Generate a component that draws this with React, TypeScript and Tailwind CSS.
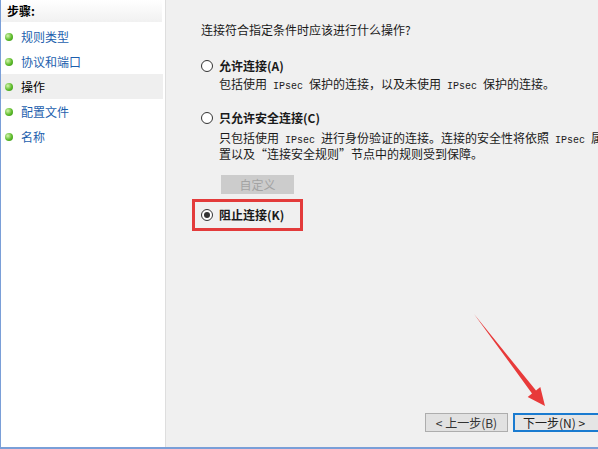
import React from "react";

const steps = ["规则类型", "协议和端口", "操作", "配置文件", "名称"];

function Ip() {
  return <span className="font-['Liberation_Mono'] text-[10px]"> IPsec </span>;
}

function Radio({ checked }: { checked?: boolean }) {
  return (
    <span className="w-[12px] h-[12px] rounded-full border border-[#333] bg-white flex items-center justify-center shrink-0">
      {checked && <span className="w-[6px] h-[6px] rounded-full bg-[#333]" />}
    </span>
  );
}

export default function App() {
  return (
    <div className="relative w-[598px] h-[449px] overflow-hidden flex flex-col font-['Noto_Sans_CJK_SC',sans-serif] text-[12px] text-[#1a1a1a] border-b-2 border-[#7a9fd8]">
      <div className="flex flex-1 min-h-0">
        {/* Steps */}
        <div className="w-[166px] shrink-0 bg-white border-l border-[#7a9fd8] border-r border-r-[#dedede] flex flex-col">
          <div className="h-[22px] pl-[6px] flex items-center font-bold text-black bg-gradient-to-b from-white to-[#f1f1f1] mr-[3px]">
            步骤:
          </div>
          <div className="mt-[2px] flex flex-col mr-[2px]">
            {steps.map((s, i) => (
              <div
                key={s}
                className={`h-[25px] flex items-center gap-[8px] pl-[4px] ${
                  i === 2 ? "bg-[#efefef] text-black" : "text-[#1d5fae]"
                }`}
              >
                <span className="w-[8px] h-[8px] rounded-full bg-[radial-gradient(circle_at_35%_35%,#d6f5b0,#5dbb2a_55%,#2e8a12)]" />
                {s}
              </div>
            ))}
          </div>
        </div>

        {/* Content */}
        <div className="flex-1 bg-[#f0f0f0] flex flex-col pl-[35px] pt-[22px] pb-[15px]">
          <div className="leading-[16px]">连接符合指定条件时应该进行什么操作?</div>

          <div className="mt-[21px] flex items-center gap-[6px] h-[14px] font-bold">
            <Radio />
            允许连接(A)
          </div>
          <div className="mt-[4px] pl-[18px] leading-[14px] whitespace-nowrap">
            包括使用<Ip />保护的连接，以及未使用<Ip />保护的连接。
          </div>

          <div className="mt-[17px] flex items-center gap-[6px] h-[14px] font-bold">
            <Radio />
            只允许安全连接(C)
          </div>
          <div className="mt-[6px] pl-[18px] leading-[13px] whitespace-nowrap">
            <div>只包括使用<Ip />进行身份验证的连接。连接的安全性将依照<Ip />属性</div>
            <div>置以及“连接安全规则”节点中的规则受到保障。</div>
          </div>

          <div className="mt-[15px] ml-[20px] w-[73px] h-[19px] bg-[#cccccc] text-[#a3a3a3] flex items-center justify-center">
            自定义
          </div>

          <div className="mt-[5px] -ml-[9px] w-[111px] h-[32px] border-[3px] border-[#e33b3b] flex items-center gap-[6px] pl-[6px] font-bold">
            <Radio checked />
            阻止连接(K)
          </div>

          <div className="mt-auto flex gap-[5px] pl-[224px]">
            <div className="w-[83px] h-[19px] shrink-0 bg-[#e1e1e1] border border-[#adadad] flex items-center justify-center text-[#333]">
              &lt; 上一步(B)
            </div>
            <div className="w-[90px] h-[19px] shrink-0 bg-[#e5e5e5] border-2 border-[#1a7bd0] flex items-center pl-[8px] text-[#222]">
              下一步(N) &gt;
            </div>
          </div>
        </div>
      </div>

      <svg className="absolute inset-0 pointer-events-none" width="598" height="449">
        <polygon
          points="474,314 536,390.5 540.3,387.1 545,406 527.7,396.9 532,393.5"
          fill="#e83a3a"
        />
      </svg>
    </div>
  );
}
